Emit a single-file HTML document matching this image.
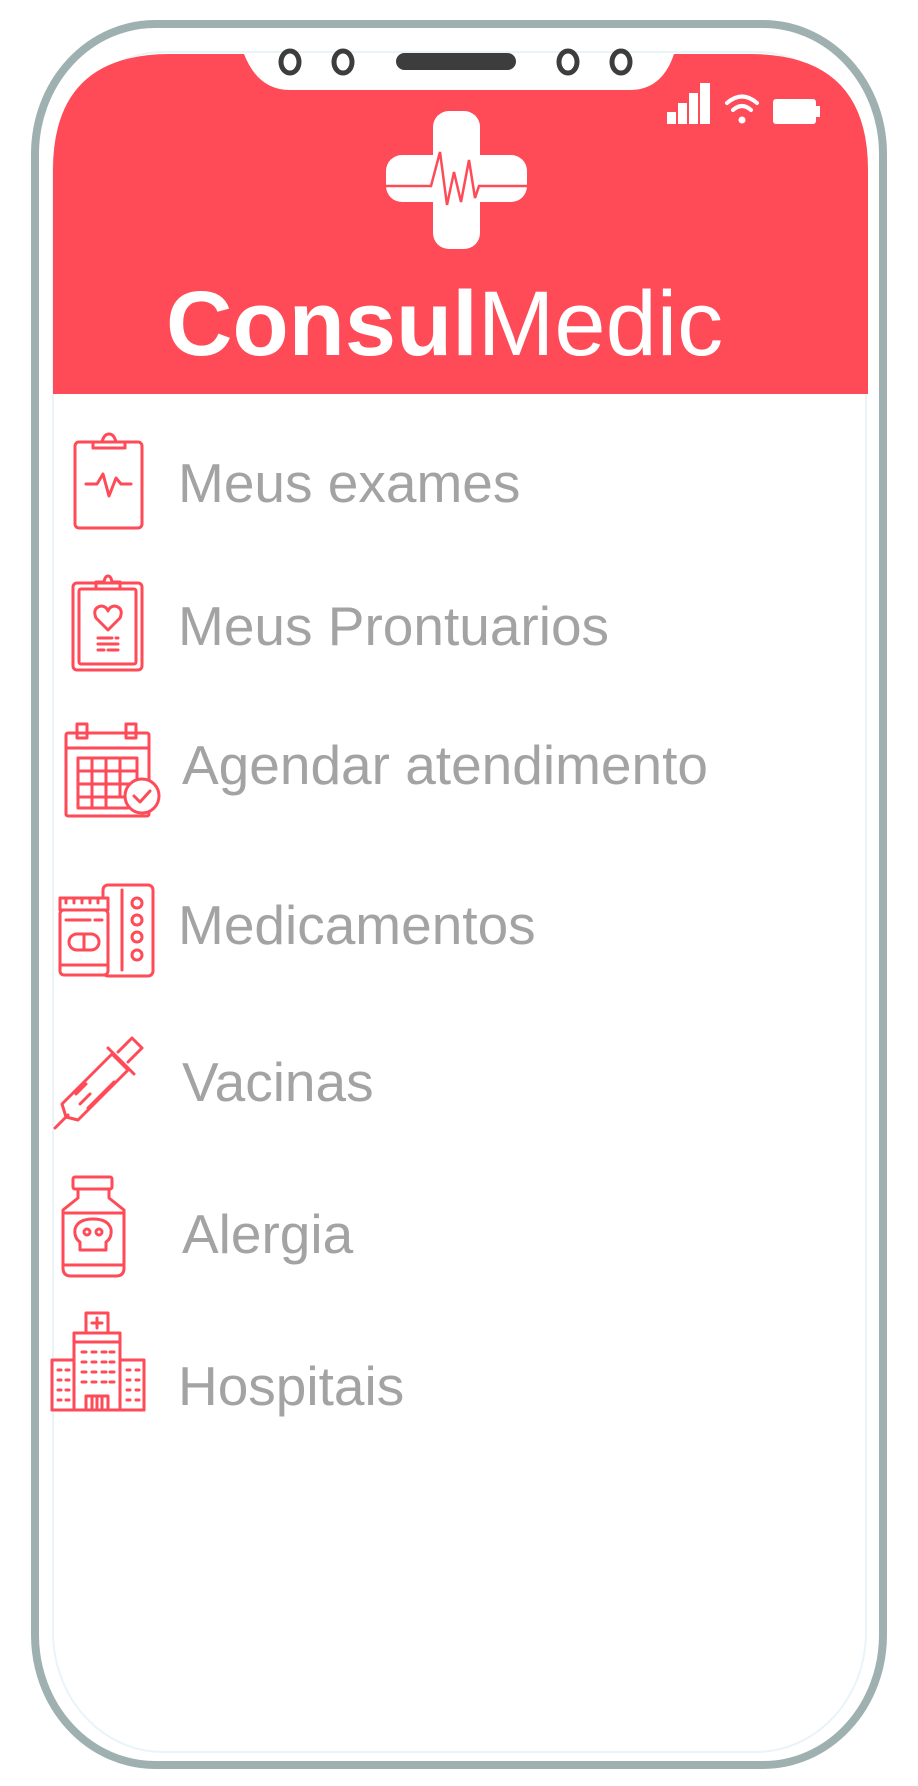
<!DOCTYPE html>
<html><head><meta charset="utf-8"><style>
html,body{margin:0;padding:0;background:#fff;width:918px;height:1786px;overflow:hidden}
svg{position:absolute;left:0;top:0}
.t{position:absolute;font-family:"Liberation Sans",sans-serif;color:#a3a3a3;font-size:55px;white-space:nowrap;line-height:1}
</style></head><body>
<svg width="918" height="1786" viewBox="0 0 918 1786">
<rect x="35" y="24" width="848" height="1741" rx="120" ry="130" fill="#fff" stroke="#9fb0b0" stroke-width="8"/>
<rect x="53" y="52" width="813" height="1700" rx="110" ry="120" fill="none" stroke="#eaf3f8" stroke-width="2"/>
<path d="M53 394 V170 Q53 54 170 54 H244 Q258 90 290 90 H630 Q662 90 674 54 H750 Q868 54 868 170 V394 Z" fill="#ff4a57"/>
<g fill="none" stroke="#3d3d3d" stroke-width="5">
<ellipse cx="290" cy="62" rx="9" ry="11"/><ellipse cx="343" cy="62" rx="9" ry="11"/>
<ellipse cx="568" cy="62" rx="9" ry="11"/><ellipse cx="621" cy="62" rx="9" ry="11"/>
</g>
<rect x="396" y="53" width="120" height="17" rx="8.5" fill="#3d3d3d"/>
<g fill="#fff">
<rect x="667" y="112" width="9" height="12"/><rect x="678" y="103" width="9" height="21"/><rect x="689" y="93" width="9" height="31"/><rect x="700" y="83" width="10" height="41"/>
<rect x="773" y="99" width="43" height="25" rx="3"/><rect x="815" y="106" width="5" height="11"/>
<circle cx="742" cy="120" r="3.5"/>
</g>
<g fill="none" stroke="#fff" stroke-width="4" stroke-linecap="round">
<path d="M733 110 Q742 102 751 110"/><path d="M727 103 Q742 90 757 103"/>
</g>
<rect x="433" y="111" width="47" height="138" rx="16" fill="#fff"/>
<rect x="386" y="155" width="141" height="47" rx="16" fill="#fff"/>
<path d="M386 186 H431 L440 152 L447 205 L454 172 L461 202 L469 160 L475 198 L479 186 H527" fill="none" stroke="#ff4a57" stroke-width="2.5"/>
<g fill="none" stroke="#ff4a57" stroke-width="3" stroke-linejoin="round" stroke-linecap="round">
<!-- clipboard exam -->
<rect x="75" y="442" width="67" height="86" rx="4"/>
<path d="M93 448 V442 H102 Q104 434 109 434 Q114 434 116 442 H125 V448 Z"/>
<path d="M86 484 H97 L103 474 L109 496 L116 478 L121 484 H131"/>
<!-- prontuario -->
<rect x="73" y="583" width="69" height="87" rx="4"/><rect x="79" y="589" width="57" height="75" rx="2"/>
<path d="M96 589 V582 H104 Q105 576 108 576 Q111 576 112 582 H120 V589 Z"/>
<path d="M108 630 L96 618 Q92 608 101 606 Q106 606 108 611 Q110 606 115 606 Q124 608 120 618 Z"/>
<path d="M98 638 H112 M116 638 H118 M98 644 H118 M98 650 H104 M108 650 H118"/>
<!-- calendar -->
<rect x="66" y="733" width="83" height="83" rx="2"/><path d="M66 748 H149"/>
<rect x="77" y="724" width="10" height="14"/><rect x="126" y="724" width="10" height="14"/>
<path d="M78 758 H137 V797 M78 758 V808 H128 M78 771 H137 M78 784 H134 M78 797 H126 M92 758 V808 M106 758 V808 M120 758 V796"/>
<circle cx="142" cy="796" r="17" fill="#fff"/><path d="M134 796 L140 802 L150 791"/>
<!-- medicamentos -->
<rect x="103" y="885" width="50" height="91" rx="5"/><path d="M122 890 V970"/>
<circle cx="137" cy="903" r="5"/><circle cx="137" cy="920" r="5"/><circle cx="137" cy="937" r="5"/><circle cx="137" cy="955" r="5"/>
<rect x="60" y="898" width="48" height="12" fill="#fff"/><path d="M66 898 V903 M74 898 V903 M82 898 V903 M90 898 V903 M98 898 V903"/>
<rect x="60" y="910" width="48" height="65" rx="4" fill="#fff"/><path d="M66 920 H90 M95 920 H102 M60 965 H108"/>
<rect x="69" y="934" width="30" height="16" rx="8"/><path d="M84 934 V950"/>
<!-- syringe -->
<path d="M55 1128 L68 1115 M66 1117 L62 1104 L112 1054 L128 1070 L78 1120 Z M108 1048 L134 1074 M118 1052 L132 1038 L142 1048 L128 1062 M76 1094 L86 1084 M80 1104 L90 1094 M88 1108 L98 1098 M96 1100 L106 1090 M104 1092 L114 1082"/>
<!-- alergia bottle -->
<rect x="73" y="1177" width="39" height="12" rx="2"/>
<path d="M78 1189 V1198 L63 1210 V1268 Q63 1276 71 1276 H116 Q124 1276 124 1268 V1210 L109 1198 V1189 M63 1213 H124 M63 1265 H124"/>
<path d="M80 1250 V1242 Q74 1238 75 1229 Q78 1219 93 1219 Q108 1219 111 1229 Q112 1238 106 1242 V1250 Z"/>
<circle cx="87" cy="1232" r="3"/><circle cx="99" cy="1232" r="3"/>
<!-- hospital -->
<rect x="86" y="1313" width="22" height="20"/><path d="M97 1318 V1328 M92 1323 H102"/>
<rect x="74" y="1333" width="46" height="77"/><path d="M74 1342 H120"/>
<rect x="52" y="1360" width="22" height="50"/><rect x="120" y="1360" width="24" height="50"/>
<path d="M52 1410 H144 M86 1410 V1396 H108 V1410 M92 1398 V1408 M97 1398 V1408 M102 1398 V1408"/>
<path d="M82 1352 h4 M92 1352 h4 M102 1352 h4 M110 1352 h4 M82 1362 h4 M92 1362 h4 M102 1362 h4 M110 1362 h4 M82 1372 h4 M92 1372 h4 M102 1372 h4 M110 1372 h4 M82 1382 h4 M92 1382 h4 M102 1382 h4 M110 1382 h4 M58 1370 h3 M66 1370 h3 M58 1380 h3 M66 1380 h3 M58 1390 h3 M66 1390 h3 M58 1400 h3 M66 1400 h3 M127 1370 h3 M136 1370 h3 M127 1380 h3 M136 1380 h3 M127 1390 h3 M136 1390 h3 M127 1400 h3 M136 1400 h3"/>
</g>
</svg>
<div class="t" style="left:166px;top:278px;font-size:92px;color:#fff"><b>Consul</b>Medic</div>
<div class="t" style="left:178px;top:456px">Meus exames</div>
<div class="t" style="left:178px;top:599px">Meus Prontuarios</div>
<div class="t" style="left:182px;top:738px">Agendar atendimento</div>
<div class="t" style="left:178px;top:898px">Medicamentos</div>
<div class="t" style="left:182px;top:1055px">Vacinas</div>
<div class="t" style="left:182px;top:1207px">Alergia</div>
<div class="t" style="left:178px;top:1359px">Hospitais</div>
</body></html>
